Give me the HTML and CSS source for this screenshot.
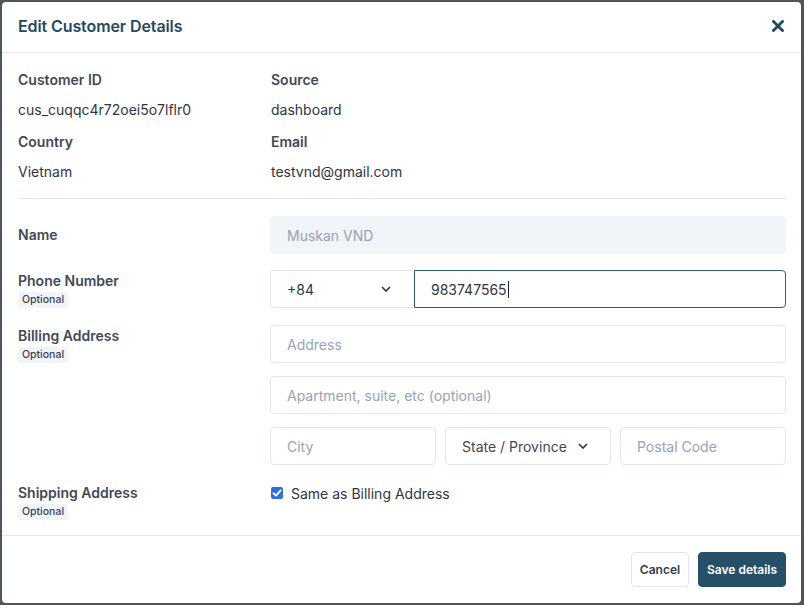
FILE: index.html
```html
<!DOCTYPE html>
<html lang="en">
<head>
<meta charset="utf-8">
<title>Edit Customer Details</title>
<link rel="stylesheet" href="styles.css">
</head>
<body>
<div class="modal">
  <div class="modal-header">
    <h2 class="modal-title">Edit Customer Details</h2>
    <button class="close-btn" aria-label="Close">
      <svg width="12" height="12" viewBox="0 0 12 12"><path d="M1.5 1.5 L10.5 10.5 M10.5 1.5 L1.5 10.5" stroke="#1f4a62" stroke-width="2.8" stroke-linecap="square" fill="none"/></svg>
    </button>
  </div>
  <div class="modal-body">
    <div class="info-grid">
      <div class="info-item">
        <div class="info-label">Customer ID</div>
        <div class="info-value">cus_cuqqc4r72oei5o7lflr0</div>
      </div>
      <div class="info-item">
        <div class="info-label">Source</div>
        <div class="info-value">dashboard</div>
      </div>
      <div class="info-item">
        <div class="info-label">Country</div>
        <div class="info-value">Vietnam</div>
      </div>
      <div class="info-item">
        <div class="info-label">Email</div>
        <div class="info-value">testvnd@gmail.com</div>
      </div>
    </div>
    <div class="divider"></div>
    <div class="form-row row-name">
      <div class="field-label center">Name</div>
      <div class="field-control">
        <input class="input input-disabled" value="Muskan VND" disabled>
      </div>
    </div>
    <div class="form-row row-phone">
      <div class="field-label">Phone Number<span class="badge">Optional</span></div>
      <div class="field-control phone-group">
        <div class="select select-code">
          <span>+84</span>
          <svg class="chev" width="10" height="6" viewBox="0 0 10 6"><path d="M1 1 L5 5 L9 1" stroke="#2d3340" stroke-width="1.6" fill="none"/></svg>
        </div>
        <div class="input input-focus"><span>983747565</span><span class="caret"></span></div>
      </div>
    </div>
    <div class="form-row row-billing">
      <div class="field-label">Billing Address<span class="badge">Optional</span></div>
      <div class="field-control stack">
        <input class="input" placeholder="Address">
        <input class="input" placeholder="Apartment, suite, etc (optional)">
        <div class="triple">
          <input class="input" placeholder="City">
          <div class="select select-state">
            <span>State / Province</span>
            <svg class="chev" width="10" height="6" viewBox="0 0 10 6"><path d="M1 1 L5 5 L9 1" stroke="#2d3340" stroke-width="1.6" fill="none"/></svg>
          </div>
          <input class="input" placeholder="Postal Code">
        </div>
      </div>
    </div>
    <div class="form-row row-shipping">
      <div class="field-label">Shipping Address<span class="badge">Optional</span></div>
      <div class="field-control">
        <label class="check-row">
          <span class="checkbox">
            <svg width="12" height="12" viewBox="0 0 12 12"><path d="M2.5 6.2 L5 8.6 L9.6 3.4" stroke="#fff" stroke-width="1.9" fill="none" stroke-linecap="round" stroke-linejoin="round"/></svg>
          </span>
          <span>Same as Billing Address</span>
        </label>
      </div>
    </div>
  </div>
  <div class="modal-footer">
    <button class="btn btn-cancel">Cancel</button>
    <button class="btn btn-save">Save details</button>
  </div>
</div>
</body>
</html>
```

FILE: styles.css
```css
* { box-sizing: border-box; }
html, body {
  margin: 0;
  padding: 0;
}
body {
  background: #4d565b;
  font-family: "Inter", "Noto Sans", sans-serif;
  color: #2f3542;
  width: 804px;
  height: 605px;
  overflow: hidden;
}
.modal {
  margin: 2px 0 0 2px;
  width: 799px;
  height: 601px;
  background: #fff;
  border-radius: 4px;
  display: flex;
  flex-direction: column;
}
.modal-header {
  height: 51px;
  border-bottom: 1px solid #e5e8ee;
  display: flex;
  align-items: center;
  justify-content: space-between;
  padding: 0 17px 2px 16px;
}
.modal-title {
  margin: 0;
  font-size: 16px;
  font-weight: 600;
  color: #1f4a62;
  letter-spacing: -0.1px;
}
.close-btn {
  border: 0;
  background: none;
  padding: 0;
  width: 12px;
  height: 12px;
  display: flex;
}
.modal-body {
  flex: 1;
  padding: 17px 15px 0 16px;
}
.info-grid {
  display: grid;
  grid-template-columns: 253px 1fr;
  row-gap: 12px;
}
.info-label {
  font-size: 14px;
  line-height: 20px;
  font-weight: 600;
  color: #414957;
}
.info-value {
  font-size: 14px;
  line-height: 20px;
  color: #2f3542;
  margin-top: 10px;
}
.divider {
  height: 1px;
  background: #e5e8ee;
  margin-top: 16px;
}
.form-row {
  display: grid;
  grid-template-columns: 252px 1fr;
}
.row-name { margin-top: 17px; align-items: center; }
.row-phone { margin-top: 16px; }
.row-billing { margin-top: 17px; }
.row-shipping { margin-top: 18px; }
.field-label {
  font-size: 14px;
  line-height: 20px;
  font-weight: 600;
  color: #414957;
  padding-top: 1px;
  display: flex;
  flex-direction: column;
  align-items: flex-start;
}
.row-name .field-label { padding-top: 0; }
.row-shipping .field-label { padding-top: 0; }
.badge {
  margin-top: 1px;
  background: #f1f4f8;
  color: #3a4150;
  font-size: 10.5px;
  font-weight: 500;
  line-height: 16px;
  padding: 0 4px;
  border-radius: 2px;
}
.input {
  display: flex;
  align-items: center;
  width: 100%;
  height: 38px;
  border: 1px solid #e3e6ee;
  border-radius: 4px;
  padding: 0 16px;
  font-family: inherit;
  font-size: 14px;
  color: #2f3542;
  background: #fff;
  outline: none;
}
.input::placeholder { color: #97a3b6; }
.input-disabled {
  background: #f1f4f8;
  border-color: #f1f4f8;
  color: #97a3b6;
  -webkit-text-fill-color: #97a3b6;
  opacity: 1;
}
.phone-group {
  display: flex;
}
.select {
  height: 38px;
  border: 1px solid #e3e6ee;
  border-radius: 4px;
  display: flex;
  align-items: center;
  justify-content: space-between;
  font-size: 14px;
  color: #2f3542;
  background: #fff;
}
.select-code {
  width: 144px;
  flex: none;
  padding: 0 23px 0 16px;
  border-radius: 4px 0 0 4px;
  border-right: 0;
}
.input-focus {
  border-color: #2a5f7d;
  border-radius: 0 4px 4px 0;
  flex: 1;
}
.caret {
  display: inline-block;
  width: 1px;
  height: 17px;
  background: #1a1f29;
  margin-left: 1px;
}
.stack {
  display: flex;
  flex-direction: column;
  gap: 13px;
}
.triple {
  display: grid;
  grid-template-columns: 1fr 1fr 1fr;
  gap: 9px;
}
.select-state {
  padding: 0 22px 0 16px;
  color: #3f4654;
}
.check-row {
  display: flex;
  align-items: center;
  height: 20px;
  font-size: 14px;
  color: #2f3542;
  gap: 8px;
  padding-left: 1px;
}
.checkbox {
  width: 12px;
  height: 12px;
  border-radius: 2px;
  background: #2f6fe3;
  display: flex;
  align-items: center;
  justify-content: center;
}
.modal-footer {
  border-top: 1px solid #e5e8ee;
  padding: 16px 15px 16px 16px;
  display: flex;
  justify-content: flex-end;
  gap: 9px;
}
.btn {
  height: 35px;
  border-radius: 4px;
  font-family: inherit;
  font-size: 12px;
  font-weight: 600;
  padding: 0;
  white-space: nowrap;
  cursor: pointer;
}
.btn-cancel {
  width: 58px;
  background: #fff;
  border: 1px solid #e3e6ee;
  color: #353c4a;
}
.btn-save {
  width: 88px;
  background: #26506a;
  border: 1px solid #26506a;
  color: #fff;
}
```
